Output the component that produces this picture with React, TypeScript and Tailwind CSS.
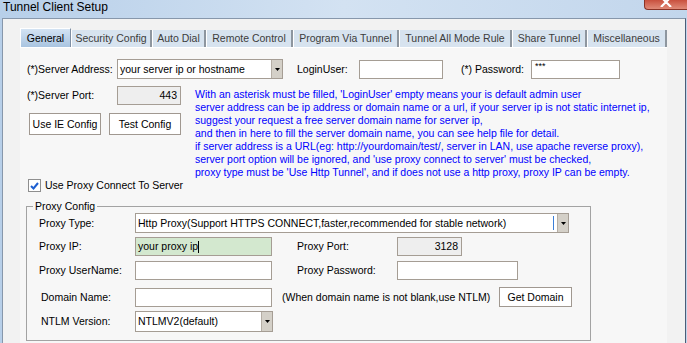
import React from "react";

const tabs = [
  { label: "General", w: "w-[51px]", sel: true },
  { label: "Security Config", w: "w-[81px]" },
  { label: "Auto Dial", w: "w-[54px]" },
  { label: "Remote Control", w: "w-[87px]" },
  { label: "Program Via Tunnel", w: "w-[106px]" },
  { label: "Tunnel All Mode Rule", w: "w-[113px]" },
  { label: "Share Tunnel", w: "w-[75px]" },
  { label: "Miscellaneous", w: "w-[80px]" },
];

const blueLines = [
  "With an asterisk must be filled, 'LoginUser' empty means your is default admin user",
  "server address can be ip address or domain name or a url, if your server ip is not static internet ip,",
  "suggest your request a free server domain name for server ip,",
  "and then in here to fill the server domain name, you can see help file for detail.",
  "if server address is a URL(eg: http://yourdomain/test/, server in LAN, use apache reverse proxy),",
  "server port option will be ignored, and 'use proxy connect to server' must be checked,",
  "proxy type must be 'Use Http Tunnel', and if does not use a http proxy, proxy IP can be empty.",
];

function Arrow() {
  return (
    <div className="w-[11px] h-full bg-[#d4d0c8] border-l border-[#b5aea5] flex items-center justify-center">
      <svg width="5" height="3" viewBox="0 0 5 3">
        <path d="M0 0 L5 0 L2.5 3 Z" fill="#000" />
      </svg>
    </div>
  );
}

export default function App() {
  return (
    <div className="w-[687px] h-[343px] overflow-hidden bg-gradient-to-r from-[#b7cfe9] via-[#d3e2f2] to-[#c2d6ec] font-['Liberation_Sans',Arial,sans-serif] text-[10.5px] leading-[13px] text-black">
      {/* Title bar */}
      <div className="h-[18px] flex items-start justify-between">
        <div className="pl-[3px] pt-[1px] text-[12px] leading-[13px] text-black">Tunnel Client Setup</div>
        <div className="w-[43px] h-[10px] rounded-bl-[4px] border-l border-b border-[#8a3326] bg-gradient-to-b from-[#c8503e] to-[#e08a78] flex justify-center items-end overflow-hidden">
          <svg width="12" height="8" viewBox="0 0 12 8" className="mb-[2px]">
            <path d="M1 -2 L6 3 L11 -2 M1 8 L6 3 L11 8" stroke="#fff" strokeWidth="2.2" fill="none" />
          </svg>
        </div>
      </div>
      {/* Client area */}
      <div className="ml-[2px] w-[684px] h-[325px] border-t border-l border-r border-t-[#8797ab] border-l-[#8797ab] border-r-[#4b5d78] bg-[#f2f2f2] pt-[9px] pl-[17px]">
        {/* Tabs */}
        <div className="flex items-end h-[19px]">
          {tabs.map((t) =>
            t.sel ? (
              <div
                key={t.label}
                className={`${t.w} h-[19px] bg-gradient-to-b from-[#d3e3f3] to-[#a9c4e0] border-t border-l border-white border-r border-r-[#7f8fa4] flex items-center justify-center text-black`}
              >
                {t.label}
              </div>
            ) : (
              <div
                key={t.label}
                className={`${t.w} h-[17px] bg-[#d7e3ef] border-l border-l-white border-r-2 border-r-[#8e969f] flex items-center justify-center text-[#3c3c3c]`}
              >
                {t.label}
              </div>
            )
          )}
        </div>
        {/* Tab page */}
        <div className="w-[647px] h-[296px] bg-[#f7f7f7] border-t border-white">
          {/* Row 1 */}
          <div className="flex items-center h-[20px] mt-[11px] pl-[7px]">
            <div className="w-[90px]">(*)Server Address:</div>
            <div className="w-[166px] h-[20px] border border-[#a59d94] bg-white flex">
              <div className="flex-1 pl-[2px] flex items-center">your server ip or hostname</div>
              <Arrow />
            </div>
            <div className="ml-[14px] w-[62px]">LoginUser:</div>
            <div className="w-[84px] h-[19px] border border-[#a59d94] bg-white" />
            <div className="ml-[18px] w-[70px]">(*) Password:</div>
            <div className="w-[89px] h-[19px] border border-[#a59d94] bg-white pl-[3px] pt-[1px] text-[9px] leading-[9px]">***</div>
          </div>
          {/* Row 2 */}
          <div className="flex mt-[7px]">
            <div className="w-[175px] pl-[7px]">
              <div className="flex items-center h-[19px]">
                <div className="w-[90px]">(*)Server Port:</div>
                <div className="w-[64px] h-[19px] border border-[#a59d94] bg-[#eeeeee] flex items-center justify-end pr-[3px]">443</div>
              </div>
              <div className="flex gap-[8px] mt-[8px] pl-[2px]">
                <div className="w-[72px] h-[22px] border border-[#a09890] bg-white flex items-center justify-center">Use IE Config</div>
                <div className="w-[72px] h-[22px] border border-[#a09890] bg-white flex items-center justify-center">Test Config</div>
              </div>
            </div>
            <div className="pt-[2px] text-[#0000ff]">
              {blueLines.map((l) => (
                <div key={l} className="whitespace-nowrap h-[13px]">{l}</div>
              ))}
            </div>
          </div>
          {/* Checkbox */}
          <div className="flex items-center h-[13px] pl-[8px]">
            <div className="w-[13px] h-[13px] border border-[#8f8f8f] bg-white flex items-center justify-center">
              <svg width="9" height="8" viewBox="0 0 9 8">
                <path d="M1 4 L3.5 6.5 L8 1" stroke="#1d5fd1" strokeWidth="2" fill="none" />
              </svg>
            </div>
            <div className="ml-[4px]">Use Proxy Connect To Server</div>
          </div>
          {/* Group box */}
          <fieldset className="ml-[6px] mt-[8px] w-[565px] h-[141px] border border-[#a3a3a3]">
            <legend className="ml-[6px] px-[2px] leading-[13px]">Proxy Config</legend>
            <div className="flex items-center h-[20px]">
              <div className="w-[108px] pl-[12px]">Proxy Type:</div>
              <div className="w-[434px] h-[20px] border border-[#a59d94] bg-white flex">
                <div className="flex-1 pl-[2px] flex items-center">
                  <span className="whitespace-nowrap">Http Proxy(Support HTTPS CONNECT,faster,recommended for stable network)</span>
                  <span className="ml-auto mr-[3px] w-[1px] h-[14px] bg-[#3b7fd8]" />
                </div>
                <Arrow />
              </div>
            </div>
            <div className="flex items-center h-[19px] mt-[4px]">
              <div className="w-[108px] pl-[12px]">Proxy IP:</div>
              <div className="w-[137px] h-[19px] border border-[#a59d94] bg-[#d3e8cf] pl-[2px] flex items-center">
                your proxy ip<span className="w-[1px] h-[12px] bg-black" />
              </div>
              <div className="ml-[25px] w-[100px]">Proxy Port:</div>
              <div className="w-[65px] h-[19px] border border-[#a59d94] bg-[#eeeeee] flex items-center justify-end pr-[3px]">3128</div>
            </div>
            <div className="flex items-center h-[19px] mt-[5px]">
              <div className="w-[108px] pl-[12px]">Proxy UserName:</div>
              <div className="w-[137px] h-[19px] border border-[#a59d94] bg-white" />
              <div className="ml-[25px] w-[100px]">Proxy Password:</div>
              <div className="w-[121px] h-[19px] border border-[#a59d94] bg-white" />
            </div>
            <div className="flex items-center h-[20px] mt-[7px]">
              <div className="w-[108px] pl-[14px]">Domain Name:</div>
              <div className="w-[137px] h-[19px] border border-[#a59d94] bg-white" />
              <div className="ml-[10px] w-[217px] whitespace-nowrap">(When domain name is not blank,use NTLM)</div>
              <div className="w-[73px] h-[20px] border border-[#a09890] bg-white flex items-center justify-center">Get Domain</div>
            </div>
            <div className="flex items-center h-[21px] mt-[4px]">
              <div className="w-[108px] pl-[14px]">NTLM Version:</div>
              <div className="w-[138px] h-[21px] border border-[#a59d94] bg-white flex">
                <div className="flex-1 pl-[2px] flex items-center">NTLMV2(default)</div>
                <Arrow />
              </div>
            </div>
          </fieldset>
        </div>
      </div>
    </div>
  );
}
